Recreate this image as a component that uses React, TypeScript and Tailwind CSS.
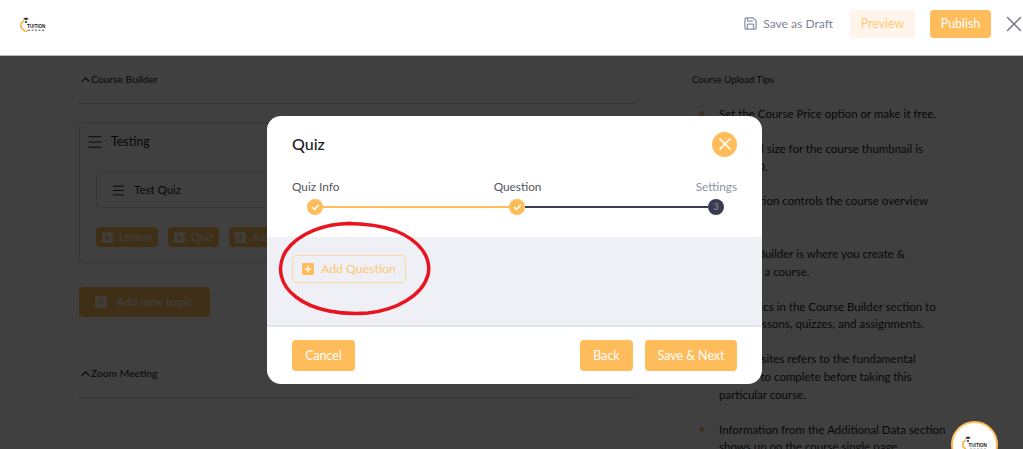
import { Check, ChevronUp, Menu, Plus, Save, X } from "lucide-react";

const tips = [
  "Set the Course Price option or make it free.",
  "Standard size for the course thumbnail is 700x430.",
  "This section controls the course overview video.",
  "Course Builder is where you create & organize a course.",
  "Add Topics in the Course Builder section to create lessons, quizzes, and assignments.",
  "Prerequisites refers to the fundamental courses to complete before taking this particular course.",
  "Information from the Additional Data section shows up on the course single page.",
];

function Logo() {
  return (
    <div className="relative w-[26px] h-[15px] self-start shrink-0">
      <svg className="absolute left-0 top-0" width="26" height="15" viewBox="0 0 26 15" fill="none">
        <path d="M3 2 L6 0.5 L9 2 L6 3 Z" fill="#222" />
        <circle cx="6" cy="5" r="1.1" fill="#333" />
        <path d="M4 3.5 L1 6.5 L1 10.5 L4.5 14 L8 14" stroke="#fbb03b" strokeWidth="1.6" />
        <path d="M8 13.2 L25 13.2" stroke="#555" strokeWidth="1" strokeDasharray="2 1.5" />
      </svg>
      <span className="absolute left-[7px] top-[7px] text-[4.6px] leading-[5px] font-bold text-[#222] font-['Liberation_Sans',sans-serif]">
        TUITION
      </span>
    </div>
  );
}

function SmallAdd({ label }: { label: string }) {
  return (
    <button className="flex items-center gap-[6px] h-[20px] pl-[6px] pr-[6px] rounded bg-[#ffbc5b] text-[11px] text-white">
      <span className="w-[11px] h-[11px] bg-white/80 flex items-center justify-center">
        <Plus size={9} strokeWidth={3} className="text-[#ffbc5b]" />
      </span>
      {label}
    </button>
  );
}

function Step({ label, muted }: { label: string; muted?: boolean }) {
  return <span className={`text-[11.8px] leading-4 ${muted ? "text-[#8e93a8]" : "text-[#55565c]"}`}>{label}</span>;
}

function DoneDot() {
  return (
    <span className="w-4 h-4 shrink-0 rounded-full bg-[#ffbc5b] flex items-center justify-center">
      <Check size={9} strokeWidth={4} className="text-white" />
    </span>
  );
}

function FooterButton({ label, width }: { label: string; width: string }) {
  return (
    <button className={`h-[31px] ${width} pt-[1px] rounded bg-[#ffbc5b] text-[12.4px] text-white`}>{label}</button>
  );
}

export default function App() {
  return (
    <div className="relative h-[449px] overflow-hidden bg-white font-['Lato','Liberation_Sans',sans-serif]">
      {/* Top bar */}
      <header className="relative z-20 h-[56px] bg-white border-b border-[#b5b5b5] flex items-center pl-[20px] pb-[8px]">
        <div className="self-start mt-[17px]">
          <Logo />
        </div>
        <div className="ml-auto flex items-center -mr-[4px]">
          <Save size={15} className="text-[#8b92a8] mr-[5px]" />
          <span className="pt-[2px] text-[12.1px] text-[#7f8498] mr-[17px]">Save as Draft</span>
          <button className="w-[65px] h-[28px] pt-[2px] rounded bg-[#fff5ea] text-[12.4px] text-[#ffc878] mr-[15px]">Preview</button>
          <button className="w-[61px] h-[28px] pt-[2px] rounded bg-[#ffbc5b] text-[12.4px] text-white mr-[10px]">Publish</button>
          <X size={26} strokeWidth={1.4} className="text-[#707a8c]" />
        </div>
      </header>

      {/* Page behind the modal */}
      <main className="flex pl-[79px] pt-[16px]">
        <section className="w-[557px] shrink-0">
          <div className="flex items-center h-[15px] text-[10.3px] text-[#222]">
            <ChevronUp size={13} strokeWidth={2.5} className="-mr-[1px]" />
            Course Builder
          </div>
          <div className="mt-[16px] border-t border-[#cfcfcf]" />
          <div className="mt-[18px] h-[141px] border border-[#d5d5d5] rounded pl-[6px] pt-[10px]">
            <div className="flex items-center gap-[7px] h-[18px] text-[12.4px] text-[#222]">
              <Menu size={18} strokeWidth={1.6} />
              Testing
            </div>
            <div className="ml-[10px] mt-[21px] h-[36px] border border-[#d5d5d5] rounded flex items-center gap-[8px] pl-[14px] text-[11.5px] text-[#222]">
              <Menu size={15} strokeWidth={1.6} />
              Test Quiz
            </div>
            <div className="ml-[10px] mt-[19px] flex gap-[10px]">
              <SmallAdd label="Lesson" />
              <SmallAdd label="Quiz" />
              <SmallAdd label="Assignment" />
            </div>
          </div>
          <button className="mt-[24px] w-[131px] h-[30px] rounded bg-[#ffbc5b] flex items-center gap-[9px] pl-[16px] text-[12px] text-white">
            <span className="w-3 h-3 bg-white/80 flex items-center justify-center">
              <Plus size={10} strokeWidth={3} className="text-[#ffbc5b]" />
            </span>
            Add new topic
          </button>
          <div className="mt-[49px] flex items-center h-[15px] text-[10.3px] text-[#222]">
            <ChevronUp size={13} strokeWidth={2.5} className="-mr-[1px]" />
            Zoom Meeting
          </div>
          <div className="mt-[16px] border-t border-[#cfcfcf]" />
        </section>

        <aside className="ml-[56px] w-[258px] shrink-0">
          <h3 className="h-[16px] text-[9.6px] leading-4 text-[#222]">Course Upload Tips</h3>
          <ul className="mt-[17px] flex flex-col gap-[17.2px]">
            {tips.map((tip) => (
              <li key={tip} className="relative pl-[27px] text-[11.5px] leading-[17.7px] text-[#222]">
                <span className="absolute left-[7px] top-[6px] w-[5px] h-[5px] rounded-full bg-[#ffbc5b]" />
                {tip}
              </li>
            ))}
          </ul>
        </aside>
      </main>

      {/* Overlay */}
      <div className="absolute inset-x-0 top-[56px] bottom-0 bg-black/75" />

      {/* Chat bubble */}
      <div className="absolute left-[951px] top-[421px] w-[47px] h-[47px] rounded-full bg-white border-2 border-[#ffbc5b] flex justify-center pt-[13px]">
        <Logo />
      </div>

      {/* Modal */}
      <div className="absolute left-[267px] top-[116px] w-[495px] h-[268px] bg-white rounded-[14px] overflow-hidden flex flex-col">
        <div className="h-[60px] shrink-0 flex items-center justify-between px-[25px] -mb-[1px] pb-[5px] pt-[1px]">
          <h2 className="text-[16px] font-medium text-[#222]">Quiz</h2>
          <span className="w-[25px] h-[25px] rounded-full bg-[#ffbc5b] flex items-center justify-center">
            <X size={20} strokeWidth={2} className="text-white" />
          </span>
        </div>
        <div className="px-[25px] flex justify-between h-[24px] items-center shrink-0">
          <Step label="Quiz Info" />
          <Step label="Question" />
          <Step label="Settings" muted />
        </div>
        <div className="flex items-center pl-[40px] h-[16px] shrink-0">
          <DoneDot />
          <span className="w-[186px] h-[2px] bg-[#ffbc5b]" />
          <DoneDot />
          <span className="w-[183px] h-[2px] bg-[#3a3d50]" />
          <span className="w-4 h-4 shrink-0 rounded-full bg-[#3a3d50] flex items-center justify-center text-[9px] text-[#8e93a8]">
            3
          </span>
        </div>
        <div className="mt-[22px] h-[90px] shrink-0 bg-[#eff0f6] border-b-2 border-[#e4e5ec] pl-[25px] pt-[18px]">
          <button className="w-[114px] h-[28px] rounded border border-[#ffd9a3] flex items-center gap-[7px] pl-[9px] text-[12.3px] text-[#ffc570]">
            <span className="w-3 h-3 bg-[#ffbc5b] rounded-[1px] flex items-center justify-center">
              <Plus size={10} strokeWidth={3} className="text-white" />
            </span>
            <span className="pt-[1px]">Add Question</span>
          </button>
        </div>
        <div className="flex-1 flex items-start px-[25px] pt-[13px] gap-[12px]">
          <FooterButton label="Cancel" width="w-[63px]" />
          <span className="flex-1" />
          <FooterButton label="Back" width="w-[53px]" />
          <FooterButton label="Save & Next" width="w-[92px]" />
        </div>
      </div>

      {/* Red ellipse drawn over the screenshot */}
      <svg className="absolute left-[276px] top-[220px]" width="158" height="98" viewBox="0 0 158 98" fill="none">
        <path
          d="M76 3.5 C48 3 22 14 10 31 C0 47 4 65 20 77 C38 91 66 95 92 93 C120 90 146 76 152 55 C156 36 142 20 120 11 C104 5 90 3.5 70 3.5"
          stroke="#e8141f"
          strokeWidth="3.5"
        />
      </svg>
    </div>
  );
}
